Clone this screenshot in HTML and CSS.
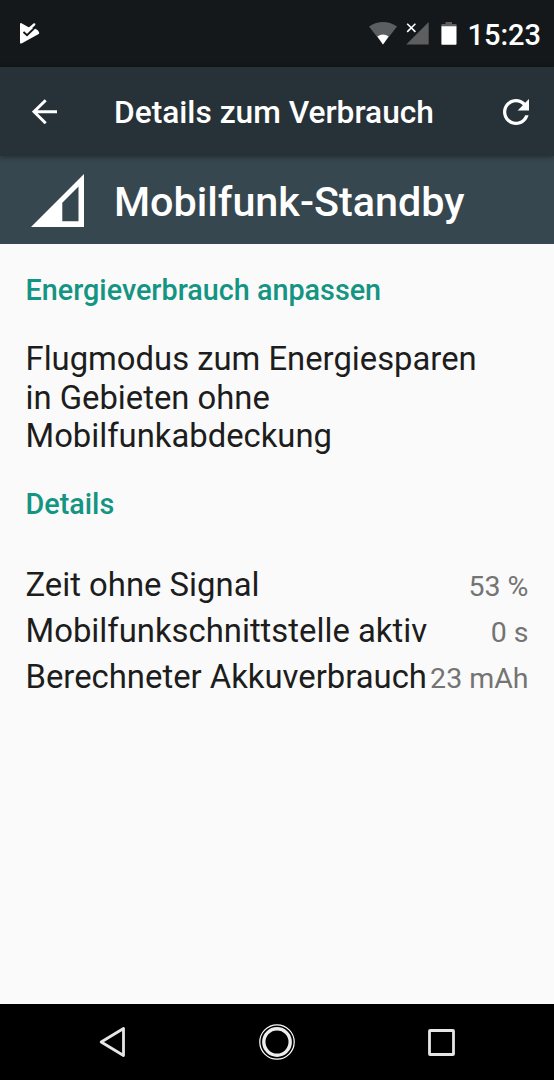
FILE: index.html
```
<!DOCTYPE html>
<html lang="de">
<head>
  <meta charset="UTF-8">
  <title>Details zum Verbrauch</title>
  <link rel="stylesheet" href="styles.css">
</head>
<body>
  <div class="statusbar">
    <svg class="notification" width="21" height="22" viewBox="0 0 21 22">
      <path d="M2 2 L10 6.5 L15 2.5 L19.2 11 L2 20.5 Z" fill="#fff" stroke="#fff" stroke-width="2" stroke-linejoin="round"/>
      <path d="M11 5.5 L15 0 H21 V9.8 L16 6.5 Z" fill="#14181b"/>
      <path d="M10.5 7 L15.2 2.4" stroke="#fff" stroke-width="2.4" stroke-linecap="round"/>
      <path d="M4.5 10 L8 13.2 L16.5 5" fill="none" stroke="#14181b" stroke-width="1.9"/>
    </svg>
    <div class="status-icons">
      <svg class="wifi" width="28" height="23" viewBox="0 0 28 23">
        <path d="M0 4.4 Q14 -4.4 28 4.4 L14 22.5 Z" fill="#5c5e60"/>
        <path d="M8.4 14.5 Q14 10.6 19.6 14.5 L14 22.5 Z" fill="#fff"/>
      </svg>
      <svg class="cell" width="23" height="23" viewBox="0 0 23 23">
        <path d="M22.7 0 V22.5 H0.2 Z" fill="#5c5e60"/>
        <path d="M1.2 1.7 L9.4 9.9 M9.4 1.7 L1.2 9.9" stroke="#fff" stroke-width="1.6"/>
      </svg>
      <svg class="battery" width="16" height="23" viewBox="0 0 16 23">
        <path d="M4.5 0 H11 V2 H15.5 V5 H0.4 V2 H4.5 Z" fill="#5c5e60"/>
        <path d="M0.4 4.2 H15.5 V22 Q15.5 22.7 14.8 22.7 H1.1 Q0.4 22.7 0.4 22 Z" fill="#fff"/>
      </svg>
      <span class="clock">15:23</span>
    </div>
  </div>

  <div class="toolbar">
    <svg class="back" width="26" height="26" viewBox="0 0 26 26">
      <path d="M13.7 1.2 L2 12.7 L13.7 24.3 M2 12.7 H25" fill="none" stroke="#fff" stroke-width="3"/>
    </svg>
    <h1>Details zum Verbrauch</h1>
    <svg class="refresh" width="26" height="26" viewBox="4 4 16 16">
      <path d="M17.65 6.35C16.2 4.9 14.21 4 12 4c-4.42 0-7.99 3.58-7.99 8s3.57 8 7.99 8c3.73 0 6.84-2.55 7.73-6h-2.08c-.82 2.33-3.04 4-5.65 4-3.31 0-6-2.69-6-6s2.69-6 6-6c1.66 0 3.14.69 4.22 1.78L13 11h7V4l-2.35 2.35z" fill="#fff"/>
    </svg>
  </div>

  <div class="header">
    <svg class="signal" width="53" height="54" viewBox="0 0 53 54">
      <path d="M53 1 V54 H0 Z M47.5 13.5 L31.3 29.7 V48.2 H47.5 Z" fill="#fff" fill-rule="evenodd"/>
    </svg>
    <h2>Mobilfunk-Standby</h2>
  </div>

  <div class="content">
    <h3>Energieverbrauch anpassen</h3>
    <p class="tip">Flugmodus zum Energiesparen in Gebieten ohne Mobilfunkabdeckung</p>
    <h3>Details</h3>
    <div class="details">
      <div class="row"><span>Zeit ohne Signal</span><span class="value">53 %</span></div>
      <div class="row"><span>Mobilfunkschnittstelle aktiv</span><span class="value">0 s</span></div>
      <div class="row"><span>Berechneter Akkuverbrauch</span><span class="value">23 mAh</span></div>
    </div>
  </div>

  <div class="navbar">
    <svg width="26" height="30" viewBox="0 0 26 30">
      <path d="M24.5 1.5 V28.5 L2.2 15 Z" fill="none" stroke="#e6e6e6" stroke-width="2.8" stroke-linejoin="round"/>
    </svg>
    <svg width="36" height="36" viewBox="0 0 36 36">
      <circle cx="18" cy="18" r="17.2" fill="none" stroke="#fff" stroke-width="1.2"/>
      <circle cx="18" cy="18" r="13.2" fill="none" stroke="#eee" stroke-width="3.4"/>
    </svg>
    <svg width="27" height="27" viewBox="0 0 27 27">
      <rect x="1.5" y="1.5" width="24" height="24" rx="0.6" fill="none" stroke="#e6e6e6" stroke-width="2.8"/>
    </svg>
  </div>
</body>
</html>
```

FILE: styles.css
```
body {
  margin: 0;
  height: 1080px;
  display: flex;
  flex-direction: column;
  overflow: hidden;
  font-family: Roboto, sans-serif;
  background-color: #fafafa;
  color: #1d1d1d;
}

h1, h2, h3, p {
  margin: 0;
}

svg {
  display: block;
  flex: none;
}

.statusbar {
  display: flex;
  justify-content: space-between;
  height: 67px;
  box-sizing: border-box;
  padding: 22px 13px 0 19px;
  background-color: #14181b;
}

.status-icons {
  display: flex;
  color: white;
}

.cell {
  margin-left: 9px;
}

.battery {
  margin-left: 12px;
}

.clock {
  margin-left: 10px;
  font-size: 29px;
  font-weight: 500;
  line-height: 26px;
}

.toolbar {
  position: relative;
  display: flex;
  align-items: center;
  height: 89px;
  box-sizing: border-box;
  padding: 0 25px 0 32px;
  background-color: #273238;
  box-shadow: 0 1px 5px rgba(0, 0, 0, 0.4);
}

.toolbar h1 {
  flex: 1;
  margin-left: 56px;
  padding-top: 2px;
  font-size: 31.7px;
  font-weight: 500;
  color: white;
}

.header {
  display: flex;
  align-items: center;
  height: 88px;
  padding-left: 31px;
  background-color: #37474f;
}

.header h2 {
  margin-left: 30px;
  padding-top: 4px;
  font-size: 41.3px;
  font-weight: 500;
  color: white;
}

.content {
  flex: 1;
  padding: 29px 25.5px 0;
}

.content h3 {
  font-size: 28.75px;
  font-weight: 500;
  line-height: 34px;
  color: #149482;
}

.tip {
  margin: 33px 0 31px;
  padding-right: 30px;
  font-size: 32.8px;
  line-height: 38.5px;
}

.details {
  margin-top: 42px;
}

.row {
  display: flex;
  justify-content: space-between;
  align-items: baseline;
  height: 46px;
  font-size: 32.85px;
  line-height: 44px;
  white-space: nowrap;
}

.value {
  font-size: 28.5px;
  color: #747474;
}

.navbar {
  display: flex;
  justify-content: space-between;
  align-items: center;
  height: 76px;
  padding: 0 99px;
  background-color: black;
}
```
